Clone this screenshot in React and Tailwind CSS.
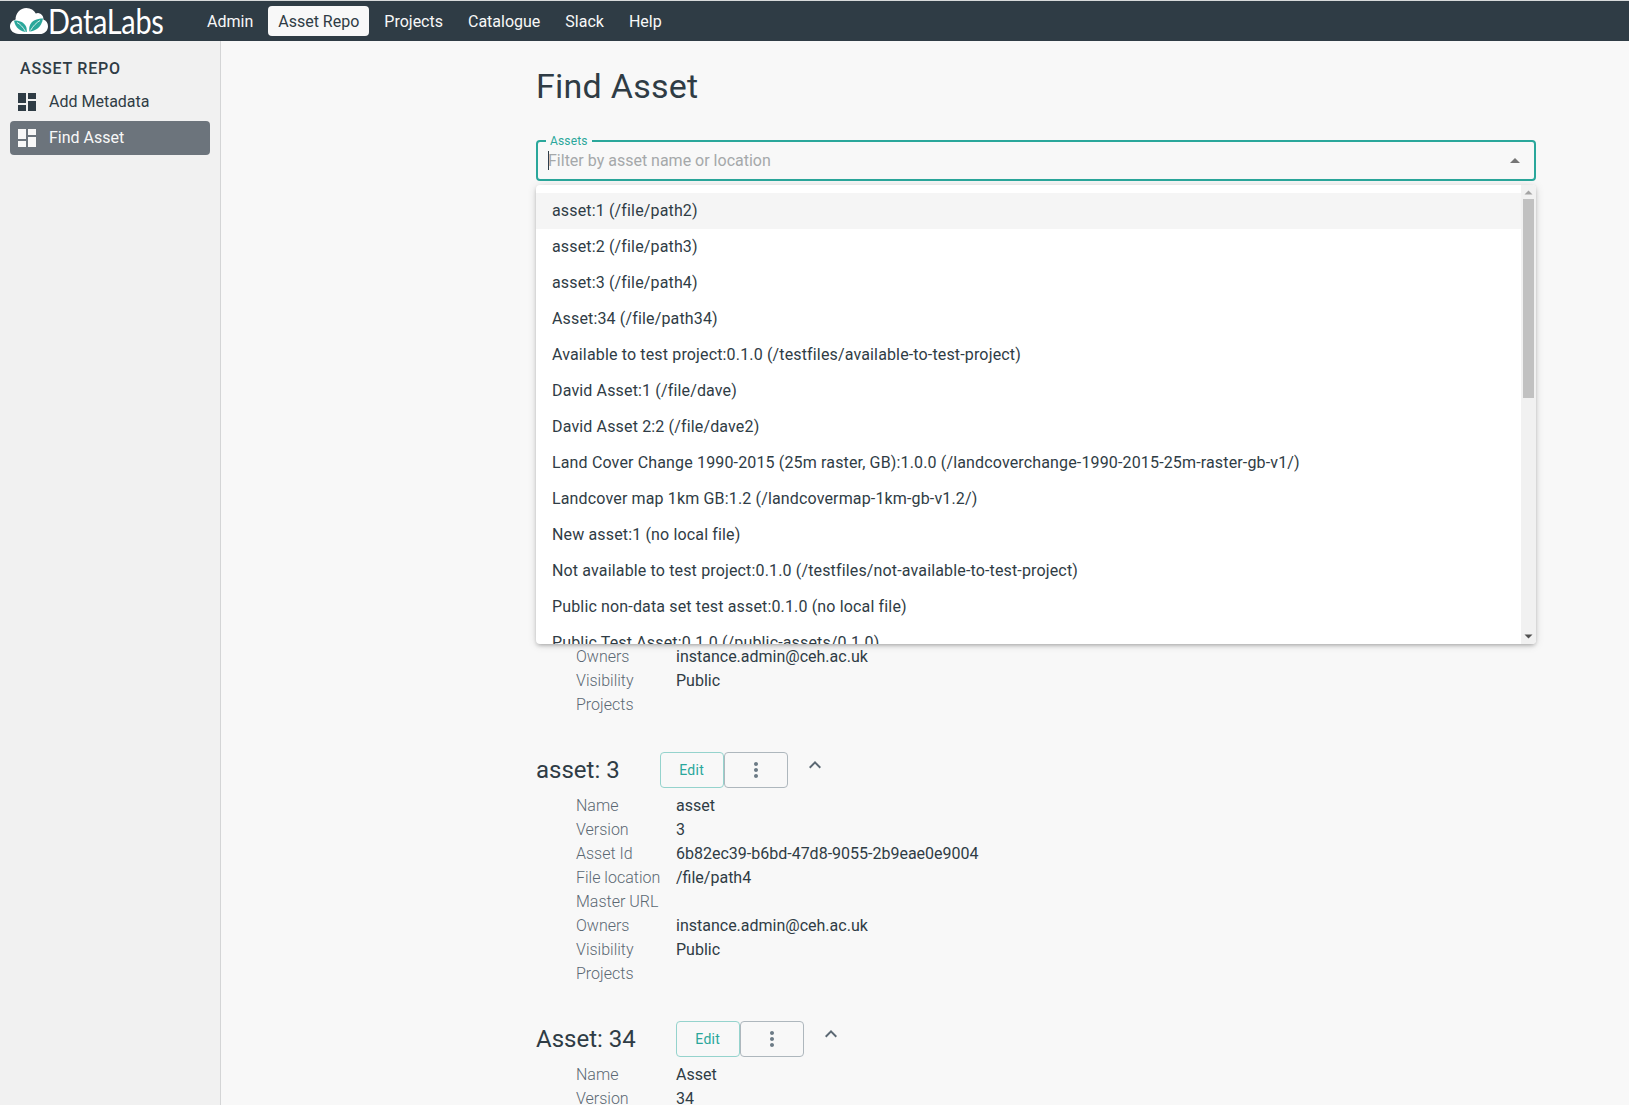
const dash = "M3 13h8V3H3v10zm0 8h8v-6H3v6zm10 0h8V11h-8v10zm0-18v6h8V3h-8z";

function DashIcon({ className }) {
  return (
    <svg viewBox="0 0 24 24" className={className} fill="currentColor"><path d={dash} /></svg>
  );
}

function Logo() {
  return (
    <div className="flex items-center ml-[10px] w-[166px] shrink-0">
      <svg viewBox="0 0 38 30" className="w-[38px] h-[30px] shrink-0">
        <path fill="#fff" d="M9 28C3.5 28 0 24.6 0 20.6 0 17 2.4 14.4 5.6 13.6 5.4 7.4 10 2 16.4 2c4.4 0 7.6 2.2 9.4 5.6 1-.4 2-.6 3-.4 3 .6 4.8 3.2 4.6 6.2 2.8 1 4.6 3.6 4.6 6.8 0 4.4-3.4 7.8-8.4 7.8z" />
        <path fill="#2aa79b" d="M4 14.5c5 0 10 1.5 12 6 .6 1.4.8 3 .8 5.5-6 0-11.5-4-12.8-11.5z" />
        <path fill="#2aa79b" d="M33 12.5c-6 0-12 2-13.5 8-.4 1.6-.4 3.5 0 5 6-.5 12-4 13.5-13z" />
        <path fill="none" stroke="#fff" strokeWidth="0.8" d="M7 16.5c3 1.5 6 4.500 8.500 9M30 14.500c-3.500 2-7 5.500-9.500 10" />
      </svg>
      <span className="text-[34px] leading-none text-white tracking-[-0.4px] font-['Lato',sans-serif] font-normal origin-left scale-x-[0.85] whitespace-nowrap">DataLabs</span>
    </div>
  );
}

const navItems = ["Admin", "Asset Repo", "Projects", "Catalogue", "Slack", "Help"];

function Header() {
  return (
    <div className="h-[41px] bg-[#2f3c45] border-t border-[#d8dadb] flex items-center shrink-0">
      <Logo />
      <nav className="flex items-center ml-[21px] gap-[5px]">
        {navItems.map((n) => (
          <div
            key={n}
            className={
              n === "Asset Repo"
                ? "h-[30px] px-[10px] pt-[2px] flex items-center rounded-[4px] bg-[#f8f8f8] text-[#2f3c45] text-[16px]"
                : "h-[30px] px-[10px] pt-[2px] flex items-center text-[#f8f8f8] text-[16px]"
            }
          >
            {n}
          </div>
        ))}
      </nav>
    </div>
  );
}

function Sidebar() {
  return (
    <aside className="w-[221px] shrink-0 bg-[#f1f1f1] border-r border-[#d4d5d6] px-[10px] pt-[16px]">
      <div className="pl-[10px] text-[16px] leading-[24px] font-medium tracking-[0.8px] text-[#2f3c45]">ASSET REPO</div>
      <div className="h-[34px] mt-[4px] flex items-center pl-[5px] text-[#2f3c45] text-[16px]">
        <DashIcon className="w-[24px] h-[24px]" />
        <span className="ml-[10px]">Add Metadata</span>
      </div>
      <div className="h-[34px] mt-[2px] flex items-center pl-[5px] rounded-[4px] bg-[#6c747c] text-[#f8f8f8] text-[16px]">
        <DashIcon className="w-[24px] h-[24px]" />
        <span className="ml-[10px]">Find Asset</span>
      </div>
    </aside>
  );
}

function Row({ label, value }) {
  return (
    <div className="flex h-[24px] items-center text-[16px]">
      <div className="w-[100px] text-[#5b6873] font-light">{label}</div>
      <div className="text-[#2f3c45]">{value}</div>
    </div>
  );
}

function Asset({ name, version, id, path }) {
  return (
    <section className="h-[269px]">
      <div className="flex items-start h-[36px]">
        <h2 className="text-[24px] leading-[36px] font-normal text-[#2f3c45] mr-[40px]">{name}: {version}</h2>
        <button className="w-[64px] h-[36px] rounded-[4px] border border-[#95d3cd] text-[#2aa79b] text-[14px] tracking-[0.3px] flex items-center justify-center">Edit</button>
        <button className="w-[64px] h-[36px] rounded-[4px] border border-[#aeb7bd] flex items-center justify-center text-[#6c7b86]">
          <svg viewBox="0 0 24 24" className="w-[24px] h-[24px]" fill="currentColor"><path d="M12 8c1.1 0 2-.9 2-2s-.9-2-2-2-2 .9-2 2 .9 2 2 2zm0 2c-1.1 0-2 .9-2 2s.9 2 2 2 2-.9 2-2-.9-2-2-2zm0 6c-1.1 0-2 .9-2 2s.9 2 2 2 2-.9 2-2-.9-2-2-2z" /></svg>
        </button>
        <svg viewBox="0 0 24 24" className="w-[24px] h-[24px] ml-[15px] mt-[1px] text-[#5b6873]" fill="currentColor"><path d="M12 8l-6 6 1.41 1.41L12 10.83l4.59 4.58L18 14z" /></svg>
      </div>
      <div className="ml-[40px] mt-[6px]">
        <Row label="Name" value={name} />
        <Row label="Version" value={version} />
        <Row label="Asset Id" value={id} />
        <Row label="File location" value={path} />
        <Row label="Master URL" value="" />
        <Row label="Owners" value="instance.admin@ceh.ac.uk" />
        <Row label="Visibility" value="Public" />
        <Row label="Projects" value="" />
      </div>
    </section>
  );
}

const options = [
  "asset:1 (/file/path2)",
  "asset:2 (/file/path3)",
  "asset:3 (/file/path4)",
  "Asset:34 (/file/path34)",
  "Available to test project:0.1.0 (/testfiles/available-to-test-project)",
  "David Asset:1 (/file/dave)",
  "David Asset 2:2 (/file/dave2)",
  "Land Cover Change 1990-2015 (25m raster, GB):1.0.0 (/landcoverchange-1990-2015-25m-raster-gb-v1/)",
  "Landcover map 1km GB:1.2 (/landcovermap-1km-gb-v1.2/)",
  "New asset:1 (no local file)",
  "Not available to test project:0.1.0 (/testfiles/not-available-to-test-project)",
  "Public non-data set test asset:0.1.0 (no local file)",
  "Public Test Asset:0.1.0 (/public-assets/0.1.0)",
];

function Dropdown() {
  return (
    <div className="absolute left-0 right-0 top-[45px] h-[459px] bg-white rounded-[4px] overflow-hidden flex shadow-[0_2px_4px_-1px_rgba(0,0,0,0.3),0_1px_10px_rgba(0,0,0,0.12)] z-10">
      <ul className="flex-1 pt-[8px] overflow-hidden">
        {options.map((o, i) => (
          <li
            key={o}
            className={
              "h-[36px] px-[16px] flex items-center whitespace-nowrap text-[16px] tracking-[0.15px] text-[#2f3c45] " +
              (i === 0 ? "bg-[#f5f5f5]" : "")
            }
          >
            {o}
          </li>
        ))}
      </ul>
      <div className="w-[15px] shrink-0 bg-[#f1f1f1] relative">
        <svg viewBox="0 0 15 15" className="absolute top-0 left-0 w-[15px] h-[15px] text-[#a3a3a3]" fill="currentColor"><path d="M3.5 9.5h8L7.5 5.5z" /></svg>
        <div className="absolute left-[2px] right-[2px] top-[14px] h-[199px] bg-[#c1c1c1]" />
        <svg viewBox="0 0 15 15" className="absolute bottom-0 left-0 w-[15px] h-[15px] text-[#505050]" fill="currentColor"><path d="M3.5 5.5h8L7.5 9.5z" /></svg>
      </div>
    </div>
  );
}

function Picker() {
  return (
    <div className="relative h-[41px]">
      <div className="h-[41px] rounded-[4px] border-2 border-[#2aa79b] flex items-center pl-[10px] pr-[7px] text-[16px]">
        <span className="w-[1px] h-[19px] -mr-[1px] bg-[#2f3c45]" />
        <span className="text-[#a5a8aa]">Filter by asset name or location</span>
        <svg viewBox="0 0 24 24" className="ml-auto w-[24px] h-[24px] text-[#757575]" fill="currentColor"><path d="M7 14l5-5 5 5z" /></svg>
      </div>
      <span className="absolute left-[10px] top-[-5px] px-[4px] bg-[#f8f8f8] text-[12px] leading-[12px] tracking-[0.15px] text-[#2aa79b]">Assets</span>
      <Dropdown />
    </div>
  );
}

export default function App() {
  return (
    <div className="h-[1105px] overflow-hidden flex flex-col bg-[#f8f8f8] font-['Roboto',sans-serif]">
      <Header />
      <div className="flex flex-1 min-h-0">
        <Sidebar />
        <main className="flex-1 pl-[315px] min-w-0 overflow-hidden">
          <div className="w-[1000px]">
            <h1 className="text-[34px] leading-[44px] font-normal text-[#2f3c45] mt-[23px] tracking-[0.25px]">Find Asset</h1>
            <div className="mt-[32px]">
              <Picker />
            </div>
            <div className="mt-[33px]">
              <Asset name="asset" version="1" id="8a2c1f70-3b1e-4c52-9a7d-1e6f0b2d7a11" path="/file/path2" />
              <Asset name="asset" version="2" id="c41d7e92-55aa-4f03-8b16-7d2e9c3a6f40" path="/file/path3" />
              <Asset name="asset" version="3" id="6b82ec39-b6bd-47d8-9055-2b9eae0e9004" path="/file/path4" />
              <Asset name="Asset" version="34" id="e1f93a20-7c44-4d18-a2b5-90c3d6e1f782" path="/file/path34" />
            </div>
          </div>
        </main>
      </div>
    </div>
  );
}
